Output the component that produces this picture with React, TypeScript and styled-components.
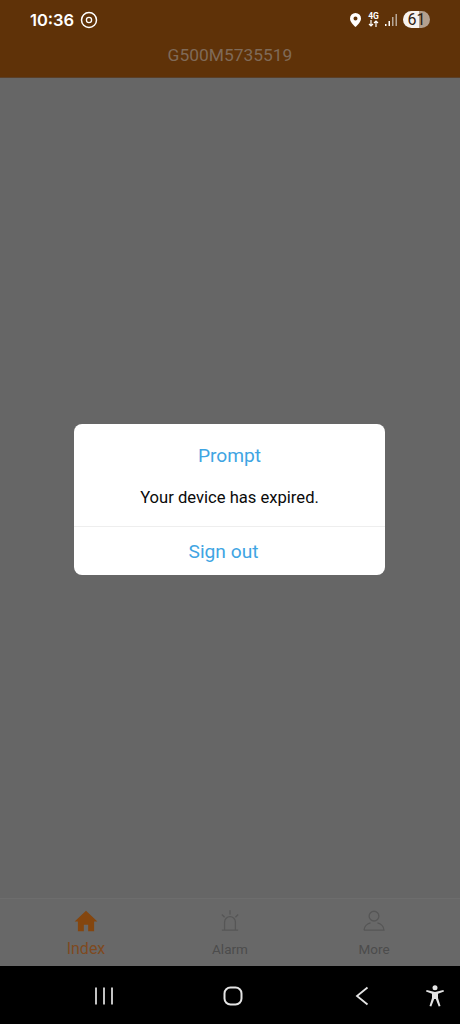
import React from 'react'
import styled, { createGlobalStyle } from 'styled-components'

const Global = createGlobalStyle`
  html, body {
    margin: 0;
    padding: 0;
    background: #666;
  }
  body {
    font-family: Roboto, "Liberation Sans", sans-serif;
  }
`

const Screen = styled.div`
  width: 460px;
  height: 1024px;
  display: flex;
  flex-direction: column;
  overflow: hidden;
  background: #666666;
`

const Header = styled.header`
  height: 78px;
  flex: none;
  background: #5f3208;
  display: flex;
  flex-direction: column;
  border-bottom: 1px solid #5a3f28;
  box-sizing: border-box;
`

const StatusBar = styled.div`
  height: 39px;
  display: flex;
  align-items: center;
  justify-content: space-between;
  padding: 0 30px;
`

const StatusGroup = styled.div`
  display: flex;
  align-items: center;
`

const Clock = styled.span`
  font-family: Inter, Roboto, sans-serif;
  font-size: 16.5px;
  font-weight: 600;
  color: #fff;
  margin-right: 6px;
`

const StatusIcon = styled.svg<{ $gap?: number }>`
  display: block;
  margin-right: ${p => p.$gap ?? 0}px;
`

const Network = styled.div`
  width: 11px;
  margin-right: 6px;
  display: flex;
  flex-direction: column;
  align-items: center;
  color: #fff;
  font-size: 8.5px;
  font-weight: 700;
  line-height: 8px;
`

const Battery = styled.div`
  width: 27px;
  height: 17px;
  border-radius: 9px;
  margin-left: 6px;
  background: linear-gradient(90deg, #f7f3ef 0 61%, #b3a08f 61%);
  color: #2e2012;
  font-size: 16px;
  line-height: 17px;
  text-align: center;
`

const Title = styled.div`
  text-align: center;
  color: #7f6a58;
  font-size: 17.4px;
  line-height: 33px;
`

const Body = styled.main`
  flex: 1;
  display: flex;
  align-items: center;
  justify-content: center;
  padding-top: 5px;
  box-sizing: border-box;
`

const Dialog = styled.div`
  width: 311px;
  height: 151px;
  background: #fff;
  border-radius: 8px;
  display: flex;
  flex-direction: column;
  margin: 17px 1px 0 0;
`

const DialogTitle = styled.div`
  flex: none;
  color: #3fa5e3;
  font-size: 19.2px;
  line-height: 24px;
  text-align: center;
  padding-top: 20px;
`

const Message = styled.div`
  flex: none;
  color: #0a0a0a;
  font-size: 16.6px;
  line-height: 20px;
  text-align: center;
  padding-top: 20px;
  height: 38px;
`

const Action = styled.div`
  border-top: 1px solid #eeeeee;
  flex: 1;
  min-height: 0;
  color: #3fa5e3;
  font-size: 19.2px;
  line-height: 49px;
  text-align: center;
  padding-right: 12px;
`

const TabBar = styled.nav`
  height: 68px;
  flex: none;
  display: grid;
  grid-template-columns: repeat(3, 1fr);
  background: #686868;
  border-top: 1px solid #6d6d6d;
  box-sizing: border-box;
  padding: 0 14px;
`

const Tab = styled.div<{ $active?: boolean }>`
  display: flex;
  flex-direction: column;
  align-items: center;
  padding-top: 9px;
  color: ${p => (p.$active ? '#7f4a20' : '#4c4c4c')};
  font-size: ${p => (p.$active ? '16px' : '13.5px')};
  line-height: 20px;
`

const TabIcon = styled.svg`
  width: 26px;
  height: 26px;
  margin-bottom: 5px;
`

const NavBar = styled.div`
  height: 58px;
  flex: none;
  background: #000;
  display: flex;
  align-items: center;
  box-sizing: border-box;
  padding: 2px 0 0 95px;
`

const NavIcon = styled.svg<{ $gap?: number }>`
  display: block;
  flex: none;
  margin-left: ${p => p.$gap ?? 0}px;
`

const App: React.FC = () => {
  return (
    <>
      <Global />
      <Screen>
        <Header>
          <StatusBar>
            <StatusGroup>
              <Clock>10:36</Clock>
              <svg width="18" height="18" viewBox="0 0 18 18" fill="none" stroke="#fff">
                <circle cx="9" cy="9" r="7.5" strokeWidth="1.5" />
                <circle cx="9" cy="9" r="2.6" strokeWidth="1.3" />
              </svg>
            </StatusGroup>
            <StatusGroup>
              <StatusIcon $gap={7} width="11" height="14" viewBox="0 0 11 14">
                <path
                  fill="#fff"
                  fillRule="evenodd"
                  d="M5.500 0a5.500 5.500 0 0 1 5.500 5.500c0 3.200-3.200 6.400-5.500 8.500C3.200 11.900 0 8.700 0 5.500A5.500 5.500 0 0 1 5.500 0Zm0 3.500a2 2 0 1 0 0 4 2 2 0 0 0 0-4Z"
                />
              </StatusIcon>
              <Network>
                4G
                <svg width="11" height="7" viewBox="0 0 11 7" fill="none" stroke="#fff" strokeWidth="1.200">
                  <path d="M3 0v6M1 4l2 2 2-2M8 7V1M6 3l2-2 2 2" />
                </svg>
              </Network>
              <svg width="12" height="14" viewBox="0 0 12 14">
                <rect x="0" y="11" width="1.500" height="2" fill="#fff" />
                <rect x="3.500" y="8" width="1.500" height="5" fill="#fff" />
                <rect x="7" y="4" width="1.500" height="9" fill="#b8a898" />
                <rect x="10.500" y="1" width="1.500" height="12" fill="#b8a898" />
              </svg>
              <Battery>61</Battery>
            </StatusGroup>
          </StatusBar>
          <Title>G500M5735519</Title>
        </Header>
        <Body>
          <Dialog>
            <DialogTitle>Prompt</DialogTitle>
            <Message>Your device has expired.</Message>
            <Action>Sign out</Action>
          </Dialog>
        </Body>
        <TabBar>
          <Tab $active>
            <TabIcon viewBox="0 0 24 24">
              <path fill="#84460f" d="M12 2.500 1.500 12.500h3v9h5.500v-6h4v6h5.500v-9h3Z" />
            </TabIcon>
            Index
          </Tab>
          <Tab>
            <TabIcon viewBox="0 0 24 24" fill="none" stroke="#565656" strokeWidth="1.200">
              <path d="M7 20V13a5 5 0 0 1 10 0v7M4.500 20.500h15M12 2v4M4.500 6l2.500 2.500M19.500 6 17 8.500" />
            </TabIcon>
            Alarm
          </Tab>
          <Tab>
            <TabIcon viewBox="0 0 24 24" fill="none" stroke="#565656" strokeWidth="1.200">
              <circle cx="12" cy="7.500" r="4.500" />
              <path d="M2.800 20.500h18.400c0-3.500-3-6-6-6.800M2.800 20.500c0-3.500 3-6 6-6.800" />
            </TabIcon>
            More
          </Tab>
        </TabBar>
        <NavBar>
          <NavIcon width="18" height="20" viewBox="0 0 18 20" stroke="#e4e4e4" strokeWidth="1.700">
            <path d="M1 1.500v17M9 1.500v17M17 1.500v17" />
          </NavIcon>
          <NavIcon $gap={110} width="20" height="20" viewBox="0 0 20 20" fill="none" stroke="#e4e4e4" strokeWidth="2">
            <rect x="1.500" y="1.500" width="17" height="17" rx="6" />
          </NavIcon>
          <NavIcon $gap={112} width="14" height="20" viewBox="0 0 14 20" fill="none" stroke="#e4e4e4" strokeWidth="1.800">
            <path d="M12.500 1.500 2 10l10.500 8.500" />
          </NavIcon>
          <NavIcon $gap={57} width="18" height="22" viewBox="0 0 18 22" fill="#e4e4e4">
            <circle cx="9" cy="2.700" r="2.500" />
            <path d="M0 6.500.6 5 9 7l8.400-2 .6 1.500-6 2.200V13l2.500 8-1.800.6L9.800 14H8.200l-2.900 7.600-1.800-.6L6 13V8.700Z" />
          </NavIcon>
        </NavBar>
      </Screen>
    </>
  )
}

export default App
